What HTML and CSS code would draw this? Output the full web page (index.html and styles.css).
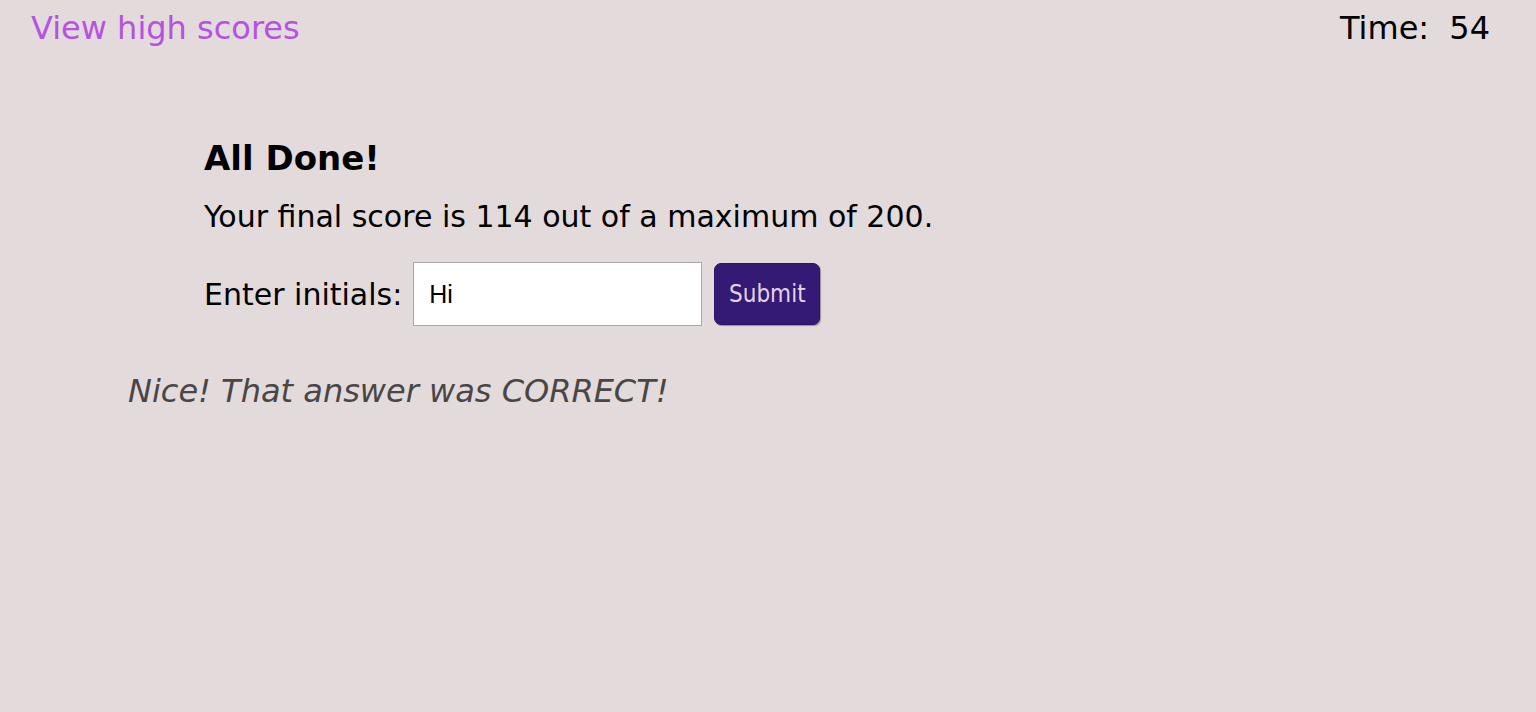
FILE: index.html
```html
<!DOCTYPE html>
<html lang="en">
<head>
<meta charset="utf-8">
<title>Quiz</title>
<link rel="stylesheet" href="styles.css">
</head>
<body>
<header class="top-bar">
  <a class="scores-link" href="#">View high scores</a>
  <div class="timer">Time: <span class="timer-value">54</span></div>
</header>
<main class="quiz">
  <section class="done">
    <h2 class="done-title">All Done!</h2>
    <p class="final-score">Your final score is 114 out of a maximum of 200.</p>
    <form class="initials-form">
      <label class="initials-label" for="initials">Enter initials:</label>
      <input class="initials-input" id="initials" type="text" value="Hi">
      <button class="submit-btn" type="button">Submit</button>
    </form>
  </section>
  <p class="feedback">Nice! That answer was CORRECT!</p>
</main>
</body>
</html>
```
FILE: styles.css
```css
html, body {
  margin: 0;
  padding: 0;
}
body {
  background: #e2dadb;
  font-family: "DejaVu Sans", Verdana, sans-serif;
  color: #000;
  min-height: 712px;
}
.top-bar {
  display: flex;
  justify-content: space-between;
  align-items: flex-start;
  padding: 10px 46px 0 31px;
  font-size: 32px;
  line-height: 37px;
}
.scores-link {
  color: #b553e0;
  text-decoration: none;
}
.timer-value {
  margin-left: 10px;
}
.quiz {
  padding: 91px 0 0 128px;
}
.done {
  padding-left: 76px;
}
.done-title {
  margin: 0;
  font-size: 34px;
  line-height: 40px;
  font-weight: bold;
}
.final-score {
  margin: 21px 0 0;
  font-size: 30px;
  line-height: 35px;
}
.initials-form {
  display: flex;
  align-items: center;
  margin-top: 28px;
}
.initials-label {
  font-size: 30px;
  line-height: 35px;
  margin-right: 11px;
}
.initials-input {
  box-sizing: border-box;
  width: 289px;
  height: 64px;
  margin: 0 12px 0 0;
  padding: 0 15px;
  border: 1px solid #a9a6ab;
  background: #fff;
  font-family: "Liberation Sans", Arial, sans-serif;
  font-size: 25px;
  color: #000;
  outline: none;
}
.submit-btn {
  box-sizing: border-box;
  width: 106px;
  height: 62px;
  padding: 0;
  border: 1px solid #2c1566;
  border-radius: 7px;
  background: #341a74;
  color: #e4d3e6;
  font-family: "DejaVu Sans Condensed", "DejaVu Sans", sans-serif;
  font-size: 24px;
  box-shadow: 1px 1px 1px rgba(60, 50, 70, 0.45);
  cursor: pointer;
}
.feedback {
  margin: 47px 0 0;
  font-size: 32px;
  line-height: 37px;
  font-style: italic;
  color: #4a4646;
}
```
